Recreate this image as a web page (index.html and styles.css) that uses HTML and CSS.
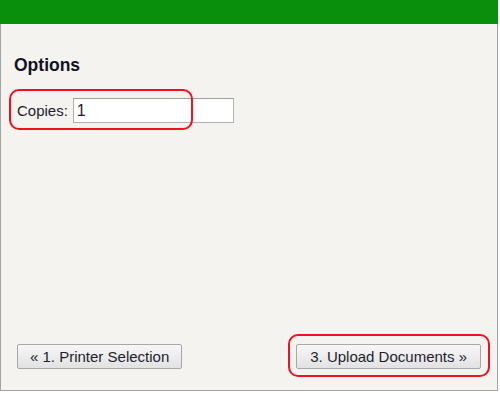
FILE: index.html
```html
<!DOCTYPE html>
<html lang="en">
<head>
    <meta charset="UTF-8">
    <title>Print Options</title>
    <link rel="stylesheet" href="styles.css">
</head>
<body>
    <div class="panel">
        <div class="topbar"></div>
        <div class="content">
            <h2>Options</h2>
            <div class="field">
                <label for="copies">Copies:</label>
                <input type="text" id="copies" value="1">
            </div>
            <div class="nav">
                <button>&laquo; 1. Printer Selection</button>
                <button class="next">3. Upload Documents &raquo;</button>
            </div>
        </div>
        <!-- highlight marks -->
        <div class="mark mark-copies"></div>
        <div class="mark mark-next"></div>
    </div>
</body>
</html>
```

FILE: styles.css
```css
body {
    margin: 0;
    background: #fff;
    font-family: Arial, "Liberation Sans", sans-serif;
    color: #1e1e2e;
}
.panel {
    position: relative;
    width: 496px;
    height: 366px;
    border: 1px solid #a3a3a3;
    border-top: none;
    background: #f4f3ef;
    box-sizing: content-box;
    padding-top: 24px;
}
.topbar {
    position: absolute;
    top: 0;
    left: -1px;
    right: -1px;
    height: 24px;
    background: #0a8f0c;
}
.content {
    display: flex;
    flex-direction: column;
    height: 100%;
    box-sizing: border-box;
    padding: 31px 16px 21px 13px;
}
h2 {
    margin: 0 0 22px 0;
    font-size: 17.5px;
    font-weight: bold;
    color: #111122;
}
.field {
    display: flex;
    align-items: center;
    padding-left: 3px;
}
label {
    font-size: 15px;
    margin-right: 5px;
}
input[type=text] {
    width: 161px;
    height: 25px;
    box-sizing: border-box;
    padding: 1px 3px;
    border: 1px solid #b0b0b0;
    border-top-color: #a0a0a0;
    background: #fff;
    font-family: Arial, "Liberation Sans", sans-serif;
    font-size: 16px;
    color: #1e1e2e;
}
.nav {
    margin-top: auto;
    display: flex;
    justify-content: space-between;
    padding-left: 3px;
}
button {
    height: 25px;
    padding: 0 12px;
    border: 1px solid #a8a8a8;
    border-radius: 2px;
    background: linear-gradient(#f7f7f7, #e2e2e2);
    font-family: Arial, "Liberation Sans", sans-serif;
    font-size: 15px;
    color: #1e1e2e;
}
.next {
    padding: 0 13px;
}
.mark {
    position: absolute;
    border: 2px solid #f01020;
    border-radius: 10px;
}
.mark-copies {
    left: 8px;
    top: 89px;
    width: 180px;
    height: 37px;
}
.mark-next {
    left: 287px;
    top: 334px;
    width: 198px;
    height: 39px;
}
```
